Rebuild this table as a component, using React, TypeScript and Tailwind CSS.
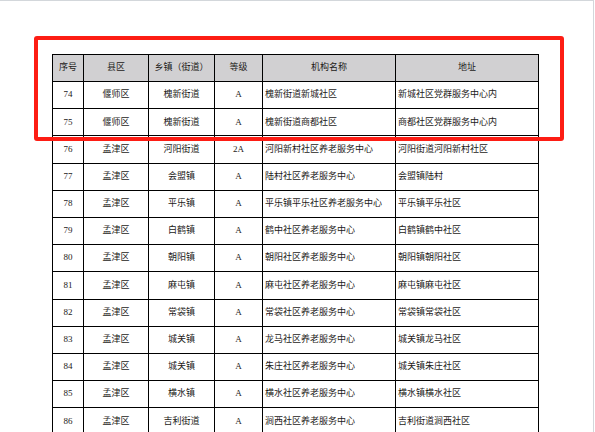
import React from "react";

const rows: [string, string, string, string, string, string][] = [
  ["74", "偃师区", "槐新街道", "A", "槐新街道新城社区", "新城社区党群服务中心内"],
  ["75", "偃师区", "槐新街道", "A", "槐新街道商都社区", "商都社区党群服务中心内"],
  ["76", "孟津区", "河阳街道", "2A", "河阳新村社区养老服务中心", "河阳街道河阳新村社区"],
  ["77", "孟津区", "会盟镇", "A", "陆村社区养老服务中心", "会盟镇陆村"],
  ["78", "孟津区", "平乐镇", "A", "平乐镇平乐社区养老服务中心", "平乐镇平乐社区"],
  ["79", "孟津区", "白鹤镇", "A", "鹤中社区养老服务中心", "白鹤镇鹤中社区"],
  ["80", "孟津区", "朝阳镇", "A", "朝阳社区养老服务中心", "朝阳镇朝阳社区"],
  ["81", "孟津区", "麻屯镇", "A", "麻屯社区养老服务中心", "麻屯镇麻屯社区"],
  ["82", "孟津区", "常袋镇", "A", "常袋社区养老服务中心", "常袋镇常袋社区"],
  ["83", "孟津区", "城关镇", "A", "龙马社区养老服务中心", "城关镇龙马社区"],
  ["84", "孟津区", "城关镇", "A", "朱庄社区养老服务中心", "城关镇朱庄社区"],
  ["85", "孟津区", "横水镇", "A", "横水社区养老服务中心", "横水镇横水社区"],
  ["86", "孟津区", "吉利街道", "A", "涧西社区养老服务中心", "吉利街道涧西社区"],
];

const headers = ["序号", "县区", "乡镇（街道）", "等级", "机构名称", "地址"];
const widths = ["w-[31px]", "w-[65px]", "w-[66px]", "w-[48px]", "w-[133px]", "w-[143px]"];

const App: React.FC = () => {
  return (
    <div
      className="relative w-[595px] h-[432px] overflow-hidden bg-white"
      style={{ fontFamily: '"Liberation Serif", "Noto Sans CJK SC", serif' }}
    >
      <div className="w-[594px] h-[432px] border-t border-r border-[#d3d7db] pl-[52px] pt-[53px]">
        <table className="border-collapse table-fixed text-[9px] text-[#1c1a18]">
          <colgroup>
            {widths.map((w, i) => (
              <col key={i} className={w} />
            ))}
          </colgroup>
          <thead>
            <tr className="h-[27px] bg-[#d1d0d2]">
              {headers.map((h) => (
                <th key={h} className="border border-black font-normal text-center p-0">
                  {h}
                </th>
              ))}
            </tr>
          </thead>
          <tbody>
            {rows.map((r) => (
              <tr key={r[0]} className="h-[27.2px]">
                {r.map((c, i) => (
                  <td
                    key={i}
                    className={
                      i < 4
                        ? "border border-black text-center p-0 whitespace-nowrap"
                        : "border border-black text-left pl-[2px] pr-0 py-0 whitespace-nowrap"
                    }
                  >
                    {c}
                  </td>
                ))}
              </tr>
            ))}
          </tbody>
        </table>
      </div>

      {/* red highlight around header and first two rows */}
      <div className="absolute left-[34px] top-[36px] w-[530px] h-[105px] border-4 border-[#fd1d14] rounded-[3px]" />
    </div>
  );
};

export default App;
